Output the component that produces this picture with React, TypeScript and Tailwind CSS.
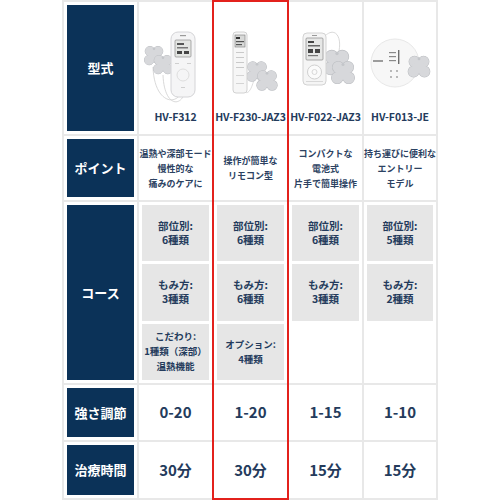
import type { ReactNode } from 'react'

interface Product {
  name: string
  point: string[]
  course: string[][]
  strength: string
  time: string
  image: ReactNode
}

// gel pad: outline drawn first, fill on top so only the union gets a rim
function Pad({ x, y, s = 1 }: { x: number; y: number; s?: number }) {
  const lobes = (
    <>
      <circle cx={-5} cy={-6} r={6} />
      <circle cx={5} cy={-6} r={6} />
      <circle cx={-6} cy={5} r={6} />
      <circle cx={6} cy={5} r={6} />
      <circle cx={0} cy={0} r={7} />
    </>
  )
  return (
    <g transform={`translate(${x} ${y}) scale(${s})`}>
      <g fill="#bdbfc3" stroke="#bdbfc3" strokeWidth={1.2}>{lobes}</g>
      <g fill="#d7d8db">{lobes}</g>
      <circle cx={0} cy={-9} r={1.6} fill="#c4c6ca" />
    </g>
  )
}

function ImgF312() {
  return (
    <svg width="67" height="105" viewBox="0 0 67 105">
      <path d="M38 90 C 30 101, 12 94, 11 62" fill="none" stroke="#cfcfcf" strokeWidth={0.8} />
      <path d="M42 90 C 36 103, 22 98, 21 70" fill="none" stroke="#cfcfcf" strokeWidth={0.8} />
      <Pad x={12} y={51} s={0.8} />
      <Pad x={21} y={60} s={0.8} />
      <rect x={29} y={27} width={24} height={65} rx={7} fill="#f5f5f6" stroke="#d4d4d7" />
      <rect x={38} y={30} width={6} height={1.2} fill="#9a9a9a" />
      <rect x={33} y={35} width={16} height={17} rx={1} fill="#e3e5e2" stroke="#8c8c8c" strokeWidth={0.7} />
      <rect x={35} y={38} width={7} height={2} fill="#555" />
      <rect x={35} y={42} width={11} height={1.5} fill="#777" />
      <rect x={35} y={46} width={5} height={3} fill="#444" />
      <rect x={42} y={46} width={5} height={3} fill="#444" />
      <circle cx={41} cy={70} r={6} fill="none" stroke="#dedede" />
      <rect x={33} y={58} width={4} height={1} fill="#cfcfcf" />
      <rect x={45} y={58} width={4} height={1} fill="#cfcfcf" />
      <rect x={39} y={82} width={4} height={1} fill="#cfcfcf" />
    </svg>
  )
}

function ImgF230() {
  return (
    <svg width="67" height="105" viewBox="0 0 67 105">
      <path d="M27 86 C 32 92, 36 80, 38 70" fill="none" stroke="#d0d0d0" strokeWidth={0.7} />
      <Pad x={40} y={67} s={0.85} />
      <Pad x={50} y={76} s={0.85} />
      <rect x={16} y={27} width={14} height={61} rx={3} fill="#f6f6f6" stroke="#d2d2d2" />
      <rect x={18} y={30} width={10} height={12} fill="#d8d9d8" stroke="#7a7a7a" strokeWidth={0.6} />
      <rect x={19} y={32} width={4} height={2} fill="#333" />
      <rect x={19} y={36} width={8} height={1.2} fill="#555" />
      <rect x={19} y={39} width={6} height={1.2} fill="#555" />
      <rect x={19} y={47} width={8} height={1} fill="#c9c9c9" />
      <rect x={19} y={52} width={8} height={1} fill="#c9c9c9" />
      <rect x={19} y={57} width={8} height={1} fill="#c9c9c9" />
      <rect x={19} y={62} width={8} height={1} fill="#c9c9c9" />
      <rect x={19} y={70} width={8} height={1} fill="#d4d4d4" />
      <rect x={19} y={78} width={8} height={1} fill="#d4d4d4" />
    </svg>
  )
}

function ImgF022() {
  return (
    <svg width="67" height="105" viewBox="0 0 67 105">
      <path d="M33 31 C 42 22, 50 30, 47 46" fill="none" stroke="#cfcfcf" strokeWidth={0.8} />
      <Pad x={45} y={58} s={1.05} />
      <Pad x={51} y={68} s={0.95} />
      <rect x={11} y={28} width={23} height={52} rx={4} fill="#f5f5f5" stroke="#d3d3d3" />
      <rect x={20} y={30} width={5} height={1} fill="#9a9a9a" />
      <rect x={14} y={33} width={17} height={22} rx={1} fill="#e6e7e6" stroke="#8a8a8a" strokeWidth={0.7} />
      <rect x={16} y={36} width={6} height={2} fill="#444" />
      <rect x={16} y={40} width={12} height={1.5} fill="#666" />
      <rect x={16} y={44} width={5} height={4} fill="#444" />
      <rect x={23} y={44} width={5} height={4} fill="#444" />
      <rect x={16} y={50} width={10} height={1.2} fill="#777" />
      <circle cx={22.5} cy={67} r={7} fill="#fbfbfb" stroke="#d0d0d0" />
      <circle cx={22.5} cy={67} r={2.5} fill="none" stroke="#d8d8d8" />
      <rect x={14} y={76} width={17} height={1} fill="#d8d8d8" />
    </svg>
  )
}

function ImgF013() {
  return (
    <svg width="67" height="105" viewBox="0 0 67 105">
      <circle cx={28} cy={58} r={24} fill="#f7f7f7" stroke="#e8e8e8" />
      <line x1={6} y1={56} x2={16} y2={56} stroke="#6b6b6b" strokeWidth={1.3} />
      <rect x={22} y={47} width={7} height={1.2} fill="#8a8a8a" />
      <rect x={22} y={51} width={7} height={1.2} fill="#8a8a8a" />
      <rect x={22} y={55} width={7} height={1.2} fill="#8a8a8a" />
      <rect x={31} y={45} width={1.4} height={14} fill="#6f6f6f" />
      <circle cx={24} cy={66} r={0.9} fill="#9a9a9a" />
      <circle cx={30} cy={66} r={0.9} fill="#9a9a9a" />
      <circle cx={24} cy={72} r={0.9} fill="#9a9a9a" />
      <circle cx={30} cy={72} r={0.9} fill="#9a9a9a" />
      <Pad x={52} y={62} s={0.9} />
    </svg>
  )
}

const products: Product[] = [
  {
    name: 'HV-F312',
    point: ['温熱や深部モード', '慢性的な', '痛みのケアに'],
    course: [['部位別:', '6種類'], ['もみ方:', '3種類'], ['こだわり:', '1種類（深部）', '温熱機能']],
    strength: '0-20',
    time: '30分',
    image: <ImgF312 />,
  },
  {
    name: 'HV-F230-JAZ3',
    point: ['操作が簡単な', 'リモコン型'],
    course: [['部位別:', '6種類'], ['もみ方:', '6種類'], ['オプション:', '4種類']],
    strength: '1-20',
    time: '30分',
    image: <ImgF230 />,
  },
  {
    name: 'HV-F022-JAZ3',
    point: ['コンパクトな', '電池式', '片手で簡単操作'],
    course: [['部位別:', '6種類'], ['もみ方:', '3種類'], []],
    strength: '1-15',
    time: '15分',
    image: <ImgF022 />,
  },
  {
    name: 'HV-F013-JE',
    point: ['持ち運びに便利な', 'エントリー', 'モデル'],
    course: [['部位別:', '5種類'], ['もみ方:', '2種類'], []],
    strength: '1-10',
    time: '15分',
    image: <ImgF013 />,
  },
]

function Label({ children }: { children: ReactNode }) {
  return (
    <div className="bg-white p-[3px]">
      <div className="h-full bg-[#0b3258] flex items-center justify-center text-white text-[13px] font-bold">
        {children}
      </div>
    </div>
  )
}

export default function App() {
  return (
    <div
      className="w-[500px] h-[500px] bg-white flex justify-center text-[#243b5c]"
      style={{ fontFamily: '"Noto Sans CJK JP", "Noto Sans", sans-serif' }}
    >
      <div className="relative w-[376px] h-[500px] bg-[#e8e8e8] p-[2px] grid grid-cols-[73px_73px_73px_73px_72px] grid-rows-[132px_64px_181px_55px_56px] gap-[2px]">
        {/* 型式 */}
        <Label>型式</Label>
        {products.map((p) => (
          <div key={p.name} className="bg-white p-[3px] flex flex-col items-center">
            <div className="h-[105px]">{p.image}</div>
            <div className="text-[10.5px] font-bold leading-[14px] whitespace-nowrap tracking-[-0.1px]">{p.name}</div>
          </div>
        ))}

        {/* ポイント */}
        <Label>ポイント</Label>
        {products.map((p) => (
          <div key={p.name} className="bg-white p-[3px] flex flex-col items-center justify-center text-[9px] font-bold leading-[15px] whitespace-nowrap text-[#2c4262]">
            {p.point.map((line) => (
              <div key={line}>{line}</div>
            ))}
          </div>
        ))}

        {/* コース */}
        <Label>コース</Label>
        {products.map((p) => (
          <div key={p.name} className="bg-white p-[3px] flex flex-col gap-[3px]">
            {p.course.map((box, i) =>
              box.length ? (
                <div
                  key={i}
                  className={`flex-1 bg-[#e6e6e6] flex flex-col items-center justify-center font-bold whitespace-nowrap ${
                    i === 2 ? 'text-[9.5px] leading-[15px]' : 'text-[10.5px] leading-[14.5px]'
                  }`}
                >
                  {box.map((line) => (
                    <div key={line}>{line}</div>
                  ))}
                </div>
              ) : (
                <div key={i} className="flex-1" />
              )
            )}
          </div>
        ))}

        {/* 強さ調節 */}
        <Label>強さ調節</Label>
        {products.map((p) => (
          <div key={p.name} className="bg-white flex items-center justify-center text-[15px] font-bold">
            {p.strength}
          </div>
        ))}

        {/* 治療時間 */}
        <Label>治療時間</Label>
        {products.map((p) => (
          <div key={p.name} className="bg-white flex items-center justify-center text-[15px] font-bold">
            {p.time}
          </div>
        ))}

        {/* recommended model outline */}
        <div className="absolute left-[150px] top-0 w-[77px] h-full border-2 border-[#e3211c] pointer-events-none" />
      </div>
    </div>
  )
}
